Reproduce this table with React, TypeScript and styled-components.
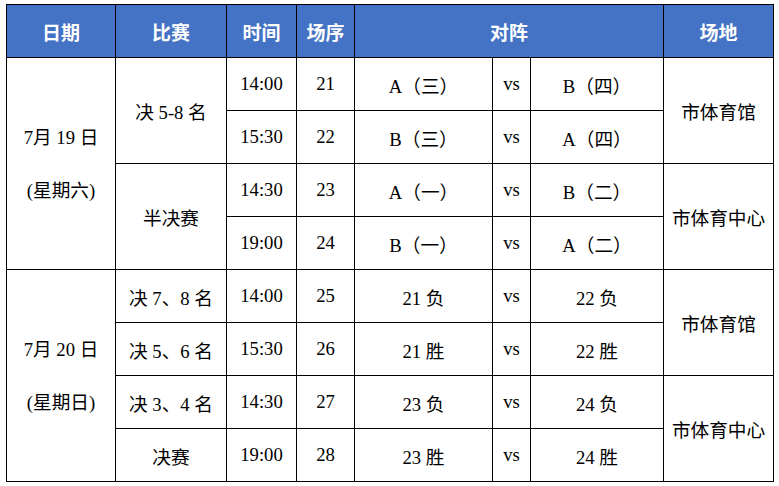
import React from 'react';
import styled, {createGlobalStyle} from "styled-components";

const Global = createGlobalStyle`
  html, body {
    margin: 0;
    padding: 0;
    background: #ffffff;
  }
`

const Page = styled.div`
  padding: 4px 0 0 6px;
`

const Schedule = styled.table`
  border-collapse: collapse;
  table-layout: fixed;
  width: 768px;
  font-family: "Liberation Serif", "Noto Sans CJK SC", serif;
  font-size: 18.67px;
  color: #000;
  td, th {
    border: 1px solid #000;
    padding: 0;
    text-align: center;
    vertical-align: middle;
    height: 52px;
    white-space: nowrap;
    overflow: hidden;
  }
`

const HeadCell = styled.th`
  background: #4472c4;
  color: #fff;
  font-family: "Noto Sans CJK SC", sans-serif;
  font-weight: 700;
  font-size: 19px;
`

const Cell = styled.td<{$venue?: boolean}>`
  font-family: ${p => p.$venue ? '"Noto Sans CJK SC", sans-serif' : 'inherit'};
`

const DateLine = styled.div`
  line-height: 53px;
`

const widths = [109, 111, 70, 58, 138, 38, 133, 110]

type Row = {
    date?: [string, string];
    match?: string;
    matchSpan?: number;
    time: string;
    no: string;
    home: string;
    away: string;
    venue?: string;
}

const rows: Row[] = [
    {date: ['7月 19 日', '(星期六)'], match: '决 5-8 名', matchSpan: 2, time: '14:00', no: '21', home: 'A（三）', away: 'B（四）', venue: '市体育馆'},
    {time: '15:30', no: '22', home: 'B（三）', away: 'A（四）'},
    {match: '半决赛', matchSpan: 2, time: '14:30', no: '23', home: 'A（一）', away: 'B（二）', venue: '市体育中心'},
    {time: '19:00', no: '24', home: 'B（一）', away: 'A（二）'},
    {date: ['7月 20 日', '(星期日)'], match: '决 7、8 名', time: '14:00', no: '25', home: '21 负', away: '22 负', venue: '市体育馆'},
    {match: '决 5、6 名', time: '15:30', no: '26', home: '21 胜', away: '22 胜'},
    {match: '决 3、4 名', time: '14:30', no: '27', home: '23 负', away: '24 负', venue: '市体育中心'},
    {match: '决赛', time: '19:00', no: '28', home: '23 胜', away: '24 胜'},
]

const App = () => {
    return (
        <Page>
            <Global/>
            <Schedule>
                <colgroup>
                    {widths.map((w, i) => <col key={i} style={{width: w}}/>)}
                </colgroup>
                <thead>
                <tr>
                    <HeadCell>日期</HeadCell>
                    <HeadCell>比赛</HeadCell>
                    <HeadCell>时间</HeadCell>
                    <HeadCell>场序</HeadCell>
                    <HeadCell colSpan={3}>对阵</HeadCell>
                    <HeadCell>场地</HeadCell>
                </tr>
                </thead>
                <tbody>
                {rows.map((r, i) => (
                    <tr key={i}>
                        {r.date && (
                            <Cell rowSpan={4}>
                                <DateLine>{r.date[0]}</DateLine>
                                <DateLine>{r.date[1]}</DateLine>
                            </Cell>
                        )}
                        {r.match && <Cell rowSpan={r.matchSpan || 1}>{r.match}</Cell>}
                        <Cell>{r.time}</Cell>
                        <Cell>{r.no}</Cell>
                        <Cell>{r.home}</Cell>
                        <Cell>vs</Cell>
                        <Cell>{r.away}</Cell>
                        {r.venue && <Cell rowSpan={2} $venue>{r.venue}</Cell>}
                    </tr>
                ))}
                </tbody>
            </Schedule>
        </Page>
    );
};

export default App;
